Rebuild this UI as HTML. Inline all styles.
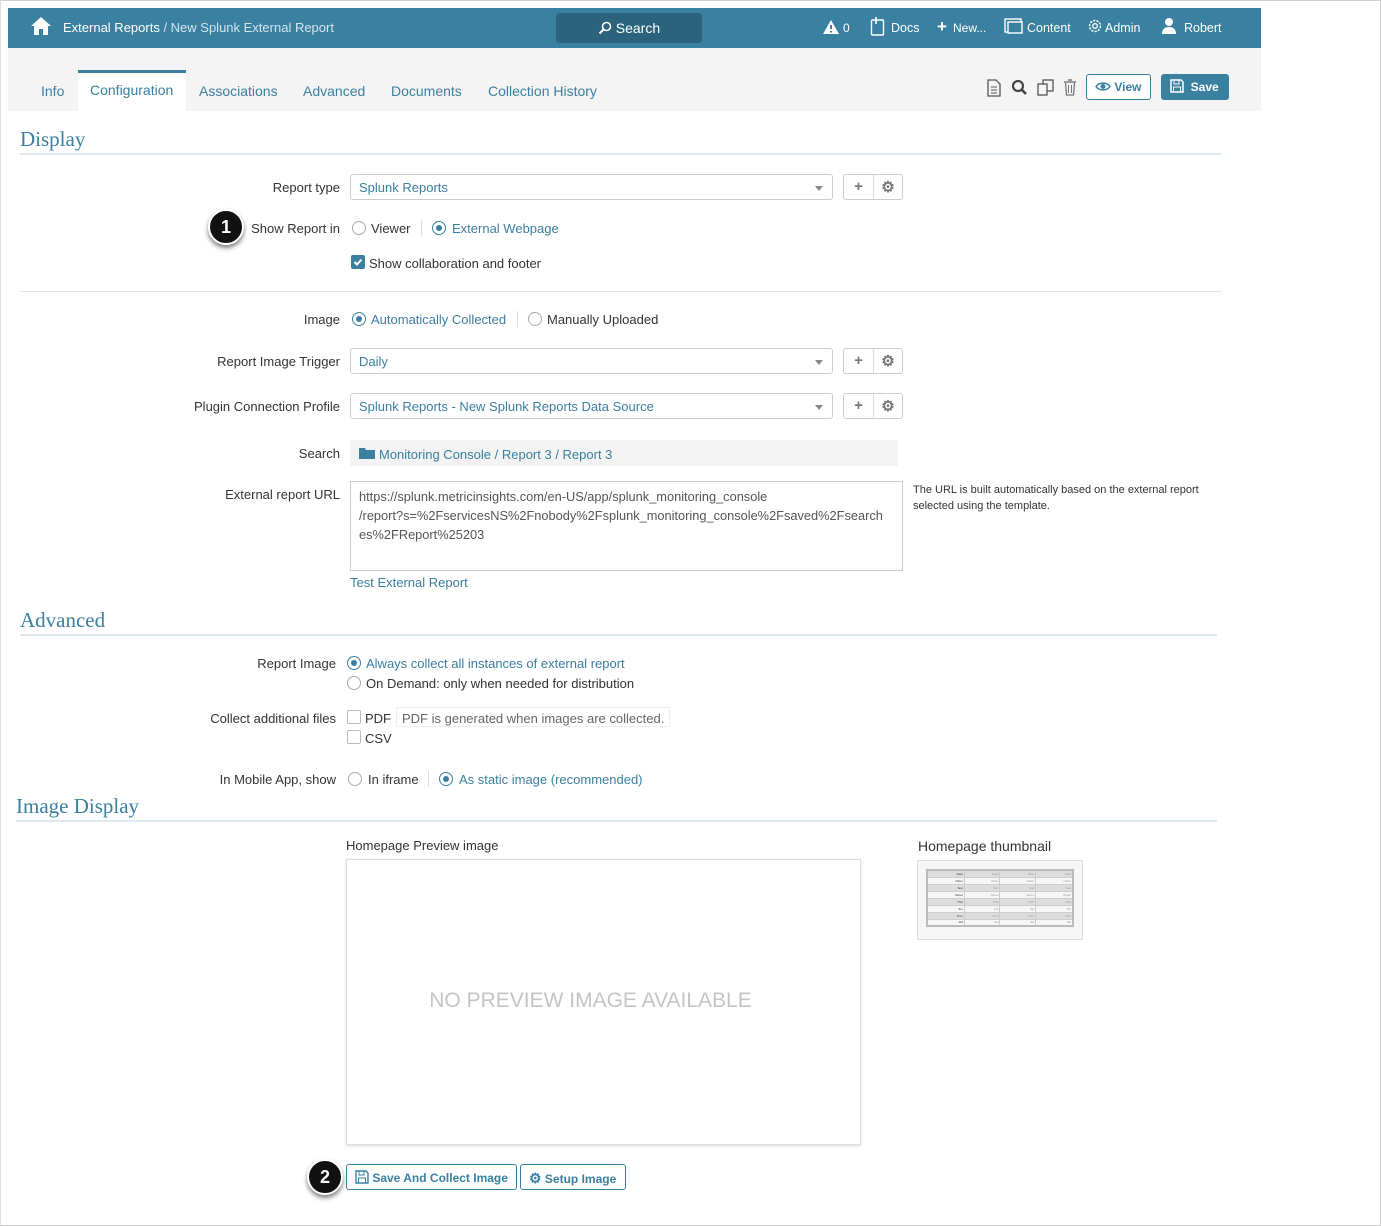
<!DOCTYPE html>
<html><head><meta charset="utf-8">
<style>
*{box-sizing:border-box;margin:0;padding:0}
body{width:1381px;height:1226px;background:#fff;font-family:"Liberation Sans",sans-serif;font-size:13px;color:#333;position:relative;overflow:hidden}
.a{position:absolute;white-space:nowrap}
.lbl{position:absolute;text-align:right;white-space:nowrap;color:#333;font-size:13px}
.blue{color:#3a7fa0}
.h{position:absolute;font-family:"Liberation Serif",serif;font-size:21px;color:#3a7fa0}
.hr{position:absolute;height:2px;background:#dde9ef}
.sel{position:absolute;border:1px solid #ccc;border-radius:3px;height:26px;background:#fff;color:#3a7fa0;padding:5px 8px}
.sel:after{content:"";position:absolute;right:9px;top:11px;border:4px solid transparent;border-top:5px solid #888}
.btn2{position:absolute;width:60px;height:26px;border:1px solid #ccc;border-radius:3px;background:#fff}
.btn2 span{position:absolute;top:3px;width:29px;text-align:center;color:#777;font-size:15px;font-weight:bold}
.rad{position:absolute;width:14px;height:14px;border:1px solid #aaa;border-radius:50%;background:#fff}
.rad.on{border-color:#3a7fa0}
.rad.on:after{content:"";position:absolute;left:3px;top:3px;width:6px;height:6px;border-radius:50%;background:#3a7fa0}
.chk{position:absolute;width:14px;height:14px;border:1px solid #bbb;border-radius:2px;background:#fff}
.sep{position:absolute;width:1px;height:16px;background:#ddd}
.badge{position:absolute;width:36px;height:36px;border-radius:50%;background:#111;border:2px solid #fff;box-shadow:0 3px 5px rgba(0,0,0,.5);color:#fff;font-weight:bold;font-size:18px;text-align:center;line-height:32px}
.tt{border-collapse:collapse;width:148px;font-size:3px;color:#999}
.tt td{border:1px solid #ccc;height:7px;text-align:right;padding:0 1px}
.tt tr:nth-child(odd) td{background:#ddd}
.tt td:first-child{color:#333}
</style></head><body>
<div class="a" style="left:0;top:0;width:1381px;height:1226px;border:1px solid #d0d0d0;border-left-color:#e0e0e0"></div>
<div class="a" style="left:8px;top:8px;width:1253px;height:40px;background:#3a80a0"></div>
<svg class="a" style="left:30px;top:16px" width="22" height="20" viewBox="0 0 22 20"><path d="M11 1L1 10h3v9h5v-6h4v6h5v-9h3z" fill="#fff"/></svg>
<div class="a" style="left:63px;top:20px;color:#fff;font-size:13px">External Reports <span style="color:#d5e6ee">/ New Splunk External Report</span></div>
<div class="a" style="left:556px;top:13px;width:146px;height:30px;background:#2b627c;border-radius:3px;color:#fff;font-size:14px;text-align:center;padding-top:7px"><svg width="14" height="14" viewBox="0 0 14 14" style="vertical-align:-2px"><circle cx="8.5" cy="5.5" r="4" fill="none" stroke="#fff" stroke-width="1.6"/><path d="M5.5 8.5L1.5 12.5" stroke="#fff" stroke-width="2"/></svg> Search</div>
<svg class="a" style="left:822px;top:19px" width="18" height="16" viewBox="0 0 18 16"><path d="M9 1L17 15H1z" fill="#fff"/><path d="M9 6v4M9 12v1.5" stroke="#3a80a0" stroke-width="2"/></svg>
<div class="a" style="left:843px;top:21px;color:#fff;font-size:12px">0</div>
<svg class="a" style="left:870px;top:16px" width="16" height="20" viewBox="0 0 16 20"><rect x="1.5" y="4" width="12" height="15" rx="1" fill="none" stroke="#fff" stroke-width="1.4"/><path d="M6 1v7" stroke="#fff" stroke-width="1.6"/></svg>
<div class="a" style="left:891px;top:21px;color:#fff;font-size:12.5px">Docs</div>
<div class="a" style="left:937px;top:17px;color:#fff;font-size:17px;font-weight:bold">+</div>
<div class="a" style="left:953px;top:21px;color:#fff;font-size:12px">New...</div>
<svg class="a" style="left:1004px;top:18px" width="20" height="16" viewBox="0 0 20 16"><rect x="1" y="1" width="16" height="13" fill="none" stroke="#fff" stroke-width="1.4"/><rect x="4" y="4" width="14" height="11" fill="#3a80a0" stroke="#fff" stroke-width="1.4"/></svg>
<div class="a" style="left:1027px;top:21px;color:#fff;font-size:12.5px">Content</div>
<svg class="a" style="left:1087px;top:18px" width="16" height="16" viewBox="0 0 16 16"><circle cx="8" cy="8" r="5.5" fill="none" stroke="#fff" stroke-width="1.4" stroke-dasharray="2.2 1.2"/><circle cx="8" cy="8" r="2.3" fill="none" stroke="#fff" stroke-width="1.3"/></svg>
<div class="a" style="left:1105px;top:21px;color:#fff;font-size:12.5px">Admin</div>
<svg class="a" style="left:1161px;top:17px" width="16" height="18" viewBox="0 0 16 18"><circle cx="8" cy="5" r="4" fill="#fff"/><path d="M1 17c0-5 3-7 7-7s7 2 7 7z" fill="#fff"/></svg>
<div class="a" style="left:1184px;top:21px;color:#fff;font-size:12.5px">Robert</div>
<div class="a" style="left:8px;top:48px;width:1253px;height:63px;background:#f4f4f4"></div>
<div class="a" style="left:78px;top:70px;width:108px;height:41px;background:#fff;border-top:3px solid #3a80a0"></div>
<div class="a blue" style="left:41px;top:83px;font-size:14px">Info</div>
<div class="a blue" style="left:90px;top:82px;font-size:14px">Configuration</div>
<div class="a blue" style="left:199px;top:83px;font-size:14px">Associations</div>
<div class="a blue" style="left:303px;top:83px;font-size:14px">Advanced</div>
<div class="a blue" style="left:391px;top:83px;font-size:14px">Documents</div>
<div class="a blue" style="left:488px;top:83px;font-size:14px">Collection History</div>
<svg class="a" style="left:986px;top:79px" width="16" height="18" viewBox="0 0 16 18"><path d="M2 1h8l4 4v12H2z" fill="none" stroke="#555" stroke-width="1.3"/><path d="M5 8h6M5 11h6M5 14h6" stroke="#555"/></svg>
<svg class="a" style="left:1011px;top:79px" width="17" height="17" viewBox="0 0 17 17"><circle cx="7" cy="7" r="5" fill="none" stroke="#444" stroke-width="2.2"/><path d="M10.5 10.5L15 15" stroke="#444" stroke-width="2.6"/></svg>
<svg class="a" style="left:1037px;top:79px" width="17" height="17" viewBox="0 0 17 17"><rect x="6" y="1" width="10" height="11" fill="none" stroke="#555" stroke-width="1.3"/><rect x="1" y="5" width="9" height="11" fill="#f4f4f4" stroke="#555" stroke-width="1.3"/></svg>
<svg class="a" style="left:1063px;top:79px" width="14" height="17" viewBox="0 0 14 17"><path d="M1 3h12M5 1h4" stroke="#777" stroke-width="1.4"/><path d="M2.5 4l1 12h7l1-12" fill="none" stroke="#777" stroke-width="1.3"/><path d="M5.5 6v8M8.5 6v8" stroke="#777"/></svg>
<div class="a" style="left:1086px;top:74px;width:65px;height:26px;border:1px solid #3a80a0;border-radius:3px;background:#fff;color:#3a80a0;font-weight:bold;font-size:12px;padding:5px 0 0 8px"><svg width="16" height="11" viewBox="0 0 16 11" style="vertical-align:-1px"><path d="M1 5.5C4 1 12 1 15 5.5 12 10 4 10 1 5.5z" fill="none" stroke="#3a80a0" stroke-width="1.4"/><circle cx="8" cy="5.5" r="2.5" fill="#3a80a0"/></svg> View</div>
<div class="a" style="left:1161px;top:74px;width:68px;height:26px;background:#3a80a0;border-radius:3px;color:#fff;font-weight:bold;font-size:12px;padding:5px 0 0 9px"><svg width="14" height="14" viewBox="0 0 14 14" style="vertical-align:-2px"><path d="M1 1h10l2 2v10H1z" fill="none" stroke="#fff" stroke-width="1.5"/><rect x="4" y="1" width="5" height="4" fill="none" stroke="#fff"/><rect x="3.5" y="8" width="7" height="5" fill="none" stroke="#fff"/></svg>&nbsp; Save</div>

<div class="h" style="left:20px;top:127px">Display</div>
<div class="hr" style="left:20px;top:153px;width:1201px"></div>
<div class="lbl" style="right:1041px;top:180px">Report type</div>
<div class="sel" style="left:350px;top:174px;width:483px">Splunk Reports</div>
<div class="btn2" style="left:843px;top:174px"><span style="left:0">+</span><span style="left:29px;border-left:1px solid #ddd;height:24px;top:0;padding-top:3px">⚙</span></div>
<div class="badge" style="left:208px;top:209px">1</div>
<div class="lbl" style="right:1041px;top:221px">Show Report in</div>
<div class="rad" style="left:352px;top:221px"></div><div class="a" style="left:371px;top:221px">Viewer</div>
<div class="sep" style="left:421px;top:220px"></div>
<div class="rad on" style="left:432px;top:221px"></div><div class="a blue" style="left:452px;top:221px">External Webpage</div>
<div class="chk" style="left:351px;top:255px;background:#3a80a0;border-color:#3a80a0"><svg width="12" height="12" viewBox="0 0 12 12" style="position:absolute;left:0;top:0"><path d="M2.5 6l2.5 2.5 4.5-5" fill="none" stroke="#fff" stroke-width="2"/></svg></div>
<div class="a" style="left:369px;top:256px">Show collaboration and footer</div>
<div class="hr" style="left:20px;top:291px;width:1201px;height:1px;background:#e3e3e3"></div>

<div class="lbl" style="right:1041px;top:312px">Image</div>
<div class="rad on" style="left:352px;top:312px"></div><div class="a blue" style="left:371px;top:312px">Automatically Collected</div>
<div class="sep" style="left:517px;top:311px"></div>
<div class="rad" style="left:528px;top:312px"></div><div class="a" style="left:547px;top:312px">Manually Uploaded</div>

<div class="lbl" style="right:1041px;top:354px">Report Image Trigger</div>
<div class="sel" style="left:350px;top:348px;width:483px">Daily</div>
<div class="btn2" style="left:843px;top:348px"><span style="left:0">+</span><span style="left:29px;border-left:1px solid #ddd;height:24px;top:0;padding-top:3px">⚙</span></div>

<div class="lbl" style="right:1041px;top:399px">Plugin Connection Profile</div>
<div class="sel" style="left:350px;top:393px;width:483px">Splunk Reports - New Splunk Reports Data Source</div>
<div class="btn2" style="left:843px;top:393px"><span style="left:0">+</span><span style="left:29px;border-left:1px solid #ddd;height:24px;top:0;padding-top:3px">⚙</span></div>

<div class="lbl" style="right:1041px;top:446px">Search</div>
<div class="a" style="left:350px;top:440px;width:548px;height:26px;background:#f3f3f3"></div>
<svg class="a" style="left:359px;top:447px" width="16" height="12" viewBox="0 0 16 12"><path d="M0 1h6l1 2h9v9H0z" fill="#3a80a0"/></svg>
<div class="a blue" style="left:379px;top:447px">Monitoring Console / Report 3 / Report 3</div>

<div class="lbl" style="right:1041px;top:487px">External report URL</div>
<div class="a" style="left:350px;top:481px;width:553px;height:90px;border:1px solid #ccc;padding:5px 8px;white-space:normal;word-break:break-all;line-height:19px;color:#555;font-size:12.8px">https://splunk.metricinsights.com/en-US/app/splunk_monitoring_console<br>/report?s=%2FservicesNS%2Fnobody%2Fsplunk_monitoring_console%2Fsaved%2Fsearch<br>es%2FReport%25203</div>
<div class="a" style="left:913px;top:482px;font-size:11px;line-height:16px;color:#333">The URL is built automatically based on the external report<br>selected using the template.</div>
<div class="a blue" style="left:350px;top:575px">Test External Report</div>

<div class="h" style="left:20px;top:608px">Advanced</div>
<div class="hr" style="left:20px;top:634px;width:1197px"></div>
<div class="lbl" style="right:1045px;top:656px">Report Image</div>
<div class="rad on" style="left:347px;top:656px"></div><div class="a blue" style="left:366px;top:656px">Always collect all instances of external report</div>
<div class="rad" style="left:347px;top:676px"></div><div class="a" style="left:366px;top:676px">On Demand: only when needed for distribution</div>
<div class="lbl" style="right:1045px;top:711px">Collect additional files</div>
<div class="chk" style="left:347px;top:710px"></div><div class="a" style="left:365px;top:711px">PDF</div>
<div class="a" style="left:396px;top:707px;width:274px;height:20px;border:1px solid #eee;color:#666;padding:3px 5px">PDF is generated when images are collected.</div>
<div class="chk" style="left:347px;top:730px"></div><div class="a" style="left:365px;top:731px">CSV</div>
<div class="lbl" style="right:1045px;top:772px">In Mobile App, show</div>
<div class="rad" style="left:348px;top:772px"></div><div class="a" style="left:368px;top:772px">In iframe</div>
<div class="sep" style="left:428px;top:771px"></div>
<div class="rad on" style="left:439px;top:772px"></div><div class="a blue" style="left:459px;top:772px">As static image (recommended)</div>

<div class="h" style="left:16px;top:794px">Image Display</div>
<div class="hr" style="left:16px;top:820px;width:1201px"></div>
<div class="a" style="left:346px;top:838px">Homepage Preview image</div>
<div class="a" style="left:346px;top:859px;width:515px;height:286px;border:1px solid #ddd;box-shadow:0 1px 3px rgba(0,0,0,.15)"></div>
<div class="a" style="left:346px;top:989px;width:489px;text-align:center;color:#c4c4c4;font-size:21px">NO PREVIEW IMAGE AVAILABLE</div>
<div class="a" style="left:918px;top:838px;font-size:14px">Homepage thumbnail</div>
<div class="a" style="left:917px;top:860px;width:166px;height:80px;border:1px solid #ddd;background:#f6f6f6;padding:8px">
<table class="tt" style="border:2px solid #bbb"><tr><td>Data</td><td>Data</td><td>Data</td><td>Data</td></tr><tr><td>Other</td><td>Other</td><td>Other</td><td>Other</td></tr><tr><td>Text</td><td>Text</td><td>Text</td><td>Text</td></tr><tr><td>About</td><td>About</td><td>About</td><td>About</td></tr><tr><td>This</td><td>This</td><td>This</td><td>This</td></tr><tr><td>the</td><td>the</td><td>the</td><td>the</td></tr><tr><td>from</td><td>from</td><td>from</td><td>from</td></tr><tr><td>def</td><td>def</td><td>def</td><td>def</td></tr></table></div>

<div class="badge" style="left:307px;top:1159px">2</div>
<div class="a" style="left:346px;top:1164px;width:171px;height:26px;border:1px solid #3a80a0;border-radius:3px;color:#3a80a0;font-weight:bold;font-size:12px;padding:5px 0 0 8px"><svg width="14" height="14" viewBox="0 0 14 14" style="vertical-align:-2px"><path d="M1 1h10l2 2v10H1z" fill="none" stroke="#3a80a0" stroke-width="1.4"/><rect x="4" y="1" width="5" height="4" fill="none" stroke="#3a80a0"/><rect x="3.5" y="8" width="7" height="5" fill="none" stroke="#3a80a0"/></svg> Save And Collect Image</div>
<div class="a" style="left:520px;top:1164px;width:106px;height:26px;border:1px solid #3a80a0;border-radius:3px;color:#3a80a0;font-weight:bold;font-size:12px;padding:5px 0 0 8px"><span style="font-size:14px">⚙</span> Setup Image</div>
</body></html>
